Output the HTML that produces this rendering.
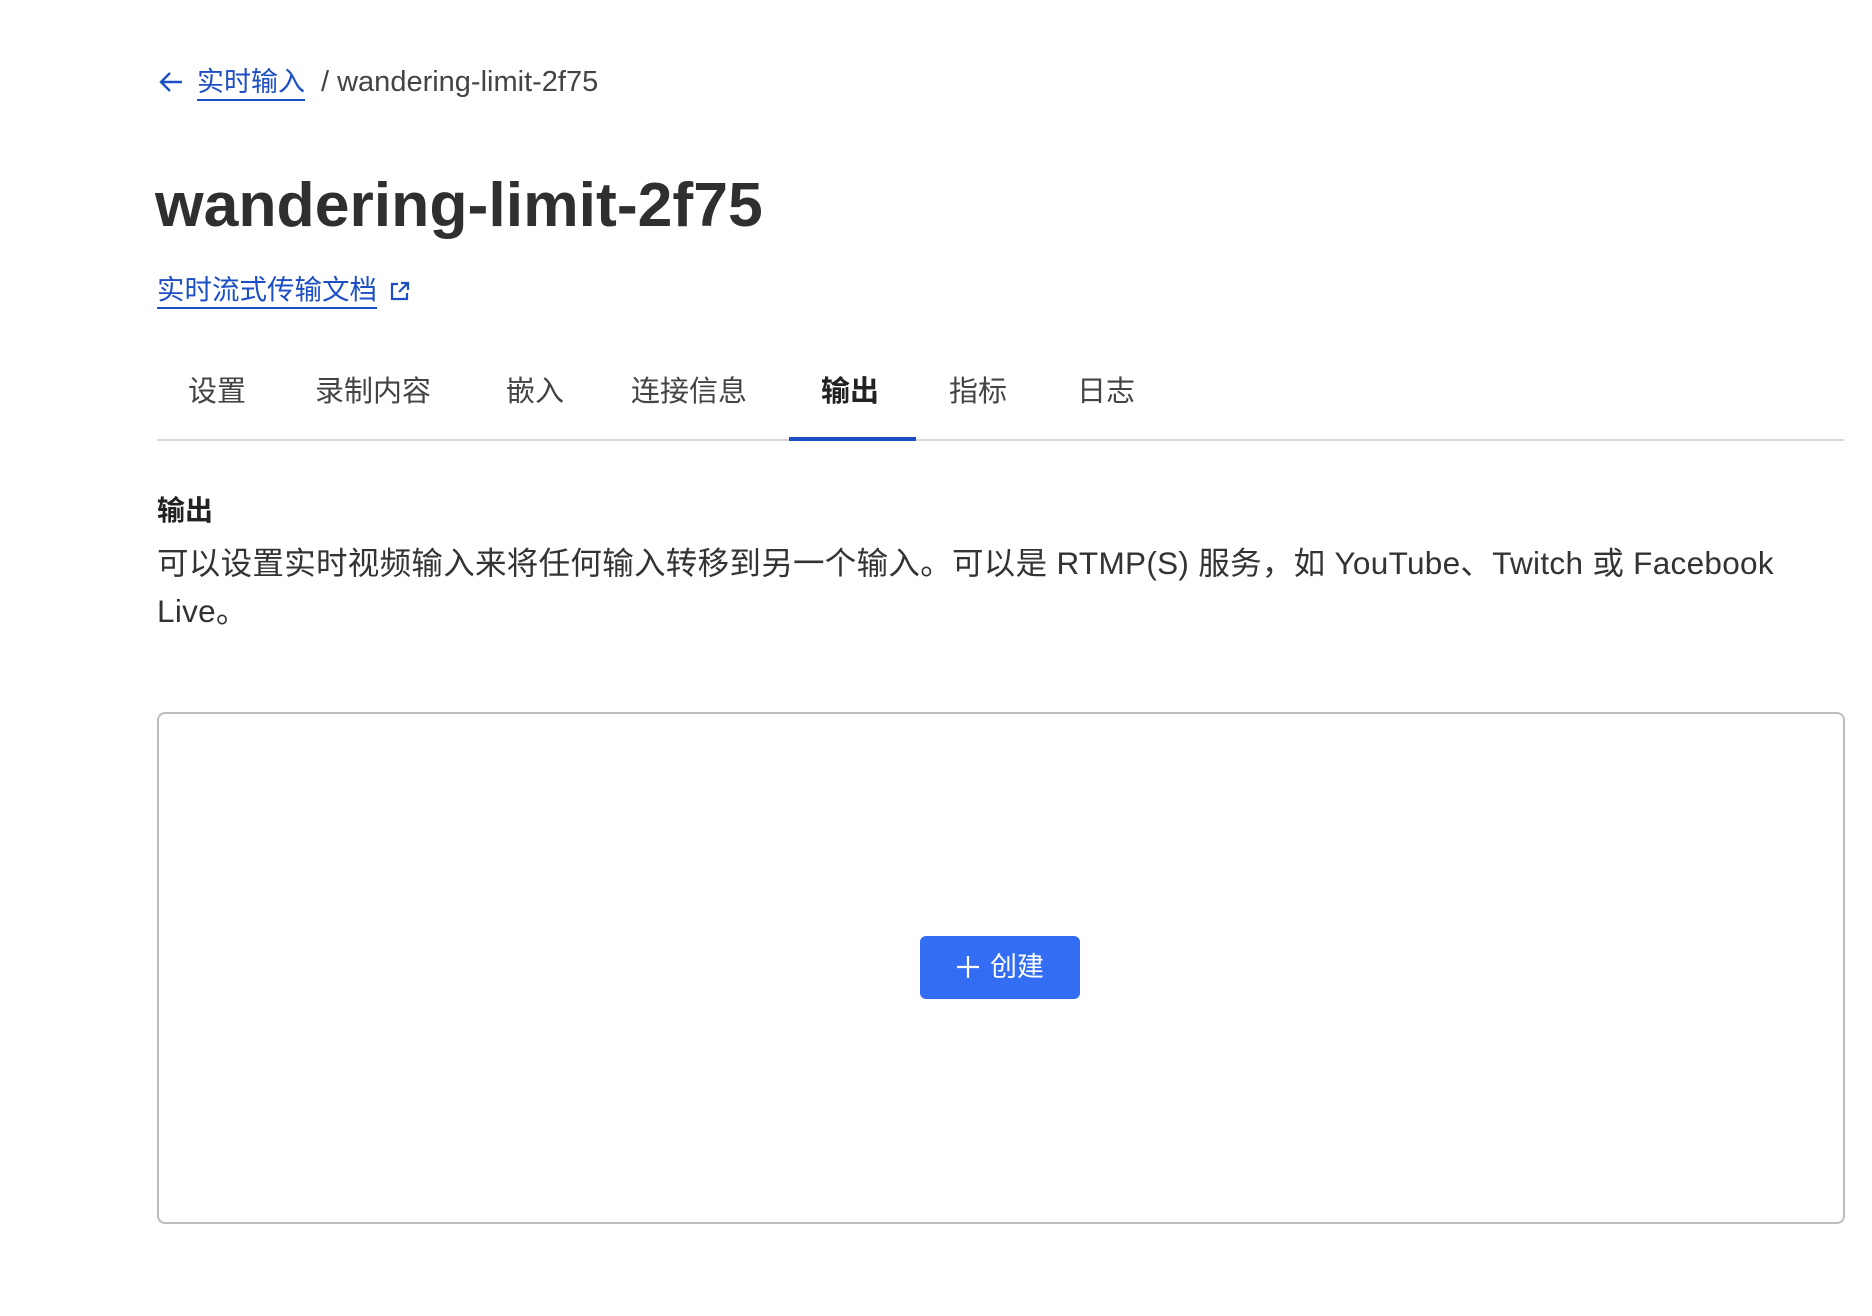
<!DOCTYPE html>
<html><head><meta charset="utf-8"><style>
body{margin:0;background:#fff;width:1872px;height:1316px;overflow:hidden;font-family:"Liberation Sans","Noto Sans CJK SC",sans-serif;color:#333;position:relative}
.abs{position:absolute;white-space:nowrap}
a{color:#1d4fc4;text-decoration:none}
</style></head><body>
<svg class="abs" style="left:158px;top:70px" width="26" height="24" viewBox="0 0 26 24"><path d="M24 12H3M12 3L3 12l9 9" fill="none" stroke="#1d4fc4" stroke-width="2.4"/></svg>
<div class="abs" style="left:197px;top:64px;font-size:27px;line-height:36px"><a style="border-bottom:2.5px solid #1d4fc4;padding-bottom:2px">实时输入</a><span style="color:#444;margin-left:16px;font-size:29px">/ wandering-limit-2f75</span></div>
<div class="abs" style="left:155px;top:165px;font-size:62.5px;font-weight:bold;line-height:80px;color:#2f2f2f">wandering-limit-2f75</div>
<div class="abs" style="left:157px;top:272px;font-size:27.5px;line-height:36px"><a style="border-bottom:2.5px solid #1d4fc4;padding-bottom:2px">实时流式传输文档</a></div>
<svg class="abs" style="left:389px;top:280px" width="22" height="22" viewBox="0 0 22 22"><path d="M9 4H3v15h15v-6M12 3h7v7M19 3l-9 9" fill="none" stroke="#1d4fc4" stroke-width="2.2"/></svg>
<div class="abs" style="left:157px;top:372px;font-size:29px;line-height:40px;color:#444">
<span class="abs" style="left:31px">设置</span><span class="abs" style="left:158px">录制内容</span><span class="abs" style="left:349px">嵌入</span><span class="abs" style="left:474px">连接信息</span><span class="abs" style="left:664px;font-weight:bold;color:#222">输出</span><span class="abs" style="left:792px">指标</span><span class="abs" style="left:920px">日志</span></div>
<div class="abs" style="left:157px;top:439px;width:1687px;height:2px;background:#d9d9d9"></div>
<div class="abs" style="left:789px;top:437px;width:127px;height:4px;background:#1d4fc4"></div>
<div class="abs" style="left:157px;top:493px;font-size:28px;font-weight:bold;line-height:36px;color:#222">输出</div>
<div class="abs" style="left:157px;top:539px;width:1700px;white-space:normal;font-size:31.5px;letter-spacing:0.3px;line-height:48px;color:#333">可以设置实时视频输入来将任何输入转移到另一个输入。可以是 RTMP(S) 服务，如 YouTube、Twitch 或 Facebook<br>Live。</div>
<div class="abs" style="left:157px;top:712px;border:2px solid #bdbdbd;border-radius:8px;box-sizing:border-box;width:1688px;height:512px"></div>
<div class="abs" style="left:920px;top:936px;width:160px;height:63px;background:#336df4;border-radius:6px;color:#fff;font-size:27px;line-height:63px;text-align:center"><svg style="vertical-align:-3px;margin-right:10px" width="24" height="24" viewBox="0 0 24 24"><path d="M12 1v22M1 12h22" stroke="#fff" stroke-width="2.2"/></svg>创建</div>
</body></html>
